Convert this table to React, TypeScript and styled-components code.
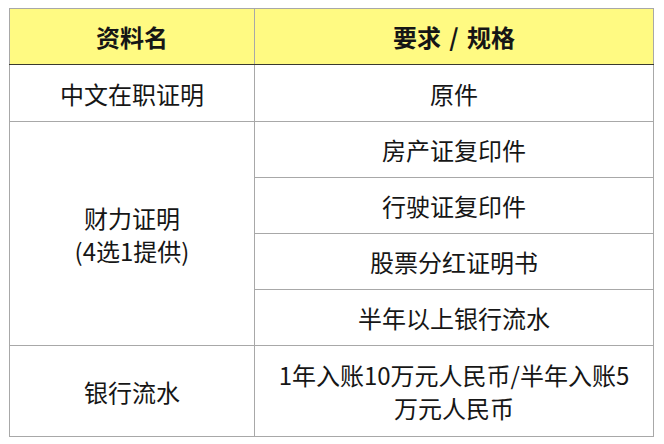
import React from "react";
import styled, { createGlobalStyle } from "styled-components";

const Global = createGlobalStyle`
  html, body { margin: 0; padding: 0; background: #ffffff; }
  body { font-family: "Noto Sans CJK SC", "Noto Sans", sans-serif; }
`;

const Page = styled.div`
  padding: 8px 0 0 9px;
`;

const Table = styled.table`
  width: 645px;
  border-collapse: collapse;
  table-layout: fixed;
  color: #161616;
  font-size: 24px;
  line-height: 33px;
`;

const HeadCell = styled.th`
  background: #fffa82;
  border: 1px solid #a8a8a8;
  border-bottom: 1px solid #3a3a30;
  height: 55px;
  padding: 0;
  font-weight: 700;
  text-align: center;
  vertical-align: middle;
  word-spacing: 3px;
`;

const Cell = styled.td<{ $h?: number }>`
  border: 1px solid #a8a8a8;
  height: ${(p) => p.$h ?? 55}px;
  padding: 0 16px;
  text-align: center;
  vertical-align: middle;
  font-weight: 400;
`;

const subs = ["房产证复印件", "行驶证复印件", "股票分红证明书", "半年以上银行流水"];

export default function App() {
  return (
    <Page>
      <Global />
      <Table>
        <colgroup>
          <col style={{ width: 245 }} />
          <col />
        </colgroup>
        <thead>
          <tr>
            <HeadCell>资料名</HeadCell>
            <HeadCell>要求 / 规格</HeadCell>
          </tr>
        </thead>
        <tbody>
          <tr>
            <Cell $h={56}>中文在职证明</Cell>
            <Cell $h={56}>原件</Cell>
          </tr>
          {subs.map((s, i) => (
            <tr key={s}>
              {i === 0 && (
                <Cell rowSpan={4}>
                  财力证明
                  <br />
                  (4选1提供)
                </Cell>
              )}
              <Cell>{s}</Cell>
            </tr>
          ))}
          <tr>
            <Cell $h={90}>银行流水</Cell>
            <Cell $h={90}>1年入账10万元人民币/半年入账5万元人民币</Cell>
          </tr>
        </tbody>
      </Table>
    </Page>
  );
}
